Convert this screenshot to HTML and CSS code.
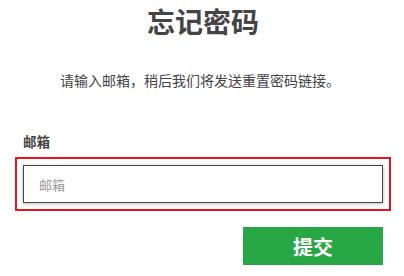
FILE: index.html
```html
<!doctype html>
<html lang="zh-CN">
  <head>
    <meta charset="UTF-8" />
    <meta name="viewport" content="width=device-width, initial-scale=1.0" />
    <title>忘记密码</title>
    <link rel="stylesheet" href="styles.css">
  </head>
  <body>
    <main class="forgot">
      <h1 class="forgot-title">忘记密码</h1>
      <p class="forgot-hint">请输入邮箱，稍后我们将发送重置密码链接。</p>

      <form class="forgot-form">
        <label class="field-label" for="email">邮箱</label>
        <input id="email" class="field-input" type="email" placeholder="邮箱" />
        <div class="form-actions">
          <button type="submit" class="submit-button">提交</button>
        </div>
      </form>
    </main>
  </body>
</html>
```

FILE: styles.css
```css
/* General */
body {
  margin: 0;
  padding: 0;
  font-family: "Noto Sans CJK SC", "Noto Sans", sans-serif;
  color: #444;
  background: #fff;
}

.forgot {
  width: 360px;
  margin-left: 23px;
}

.forgot-title {
  margin: 0;
  padding-top: 4px;
  font-size: 28px;
  line-height: 34px;
  font-weight: bold;
  text-align: center;
}

.forgot-hint {
  margin: 32px 0 0;
  font-size: 14px;
  line-height: 20px;
  text-align: center;
  padding-right: 6px;
}

/* Form */
.forgot-form {
  display: flex;
  flex-direction: column;
  margin-top: 42px;
}

.field-label {
  font-size: 13.5px;
  line-height: 18px;
  font-weight: bold;
}

.field-input {
  box-sizing: border-box;
  height: 38px;
  margin-top: 15px;
  padding: 0 15px;
  border: 1px solid #444;
  border-radius: 0;
  box-shadow: 0 1px 4px rgba(0, 0, 0, 0.25);
  outline: 2px solid #e8141e;
  outline-offset: 6px;
  font-family: inherit;
  font-size: 13px;
  color: #444;
}

.field-input::placeholder {
  color: #999;
}

.form-actions {
  display: flex;
  justify-content: flex-end;
  margin-top: 24px;
}

.submit-button {
  width: 140px;
  height: 38px;
  border: none;
  background-color: #28a745;
  color: #fff;
  font-family: inherit;
  font-size: 20px;
  font-weight: bold;
  cursor: pointer;
}
```
